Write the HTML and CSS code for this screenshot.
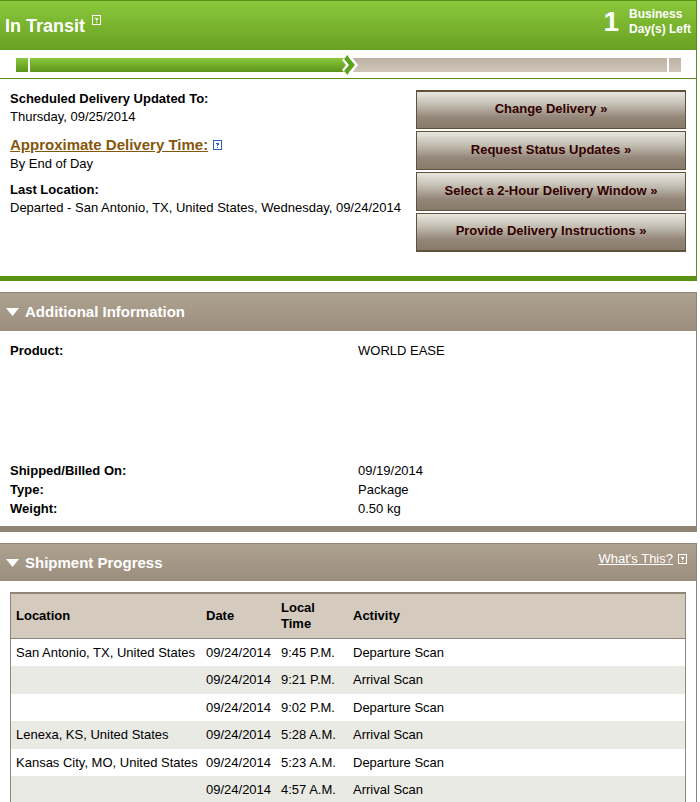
FILE: index.html
```html
<!DOCTYPE html>
<html lang="en">
<head>
<meta charset="utf-8">
<title>Tracking Detail</title>
<link rel="stylesheet" href="styles.css">
</head>
<body>
<svg class="sprite" aria-hidden="true">
  <symbol id="help" viewBox="0 0 9 10">
    <path fill="currentColor" fill-rule="evenodd" d="M0 0H9V10H0Z M1 1V9H8V1Z"/>
    <path fill="currentColor" d="M3 3H6V5H5V6H4V4H3Z M4 7H5V8H4Z"/>
  </symbol>
</svg>
<main>
  <section class="panel status">
    <header class="status-head">
      <h1>In Transit</h1>
      <a class="help raised" href="#status-help" aria-label="Help"><svg><use href="#help"/></svg></a>
      <div class="days"><span class="count">1</span><span>Business<br>Day(s) Left</span></div>
    </header>
    <div class="progress" role="img" aria-label="In transit">
      <span class="step done"></span>
      <span class="leg done"></span>
      <svg class="arrow" viewBox="0 0 18 20"><path d="M1 5L6 0L9 0L17 10L9 20L6 20L1 15L5 10Z" fill="#fff"/><path d="M3 4L6.500 0L14 10L6.500 20L3 16L8 10Z" fill="#5ca31c"/><path d="M8 1L15.500 10L8 19" fill="none" stroke="#fff" stroke-width="2"/></svg>
      <span class="leg"></span>
      <span class="step"></span>
    </div>
    <div class="status-body">
      <dl class="facts">
        <dt>Scheduled Delivery Updated To:</dt>
        <dd>Thursday, 09/25/2014</dd>
        <dt class="approx"><a href="#time">Approximate Delivery Time:</a> <a class="help blue" href="#time-help" aria-label="Help"><svg><use href="#help"/></svg></a></dt>
        <dd>By End of Day</dd>
        <dt>Last Location:</dt>
        <dd>Departed - San Antonio, TX, United States, Wednesday, 09/24/2014</dd>
      </dl>
      <div class="actions">
        <button type="button">Change Delivery »</button>
        <button type="button">Request Status Updates »</button>
        <button type="button">Select a 2-Hour Delivery Window »</button>
        <button type="button">Provide Delivery Instructions »</button>
      </div>
    </div>
  </section>

  <section class="panel">
    <header class="bar">
      <svg class="caret" viewBox="0 0 13 8"><path d="M0 0H13L6.500 8Z" fill="#fff"/></svg>
      <h2>Additional Information</h2>
    </header>
    <dl class="details">
      <div class="product"><dt>Product:</dt><dd>WORLD EASE</dd></div>
      <div><dt>Shipped/Billed On:</dt><dd>09/19/2014</dd></div>
      <div><dt>Type:</dt><dd>Package</dd></div>
      <div><dt>Weight:</dt><dd>0.50 kg</dd></div>
    </dl>
  </section>

  <section class="panel shipment">
    <header class="bar">
      <svg class="caret" viewBox="0 0 13 8"><path d="M0 0H13L6.500 8Z" fill="#fff"/></svg>
      <h2>Shipment Progress</h2>
      <div class="what"><a href="#what">What's This?</a><a class="help" href="#what" aria-label="Help"><svg><use href="#help"/></svg></a></div>
    </header>
    <div class="table-wrap">
      <table>
        <colgroup><col class="c-loc"><col class="c-date"><col class="c-time"><col></colgroup>
        <thead><tr><th>Location</th><th>Date</th><th>Local<br>Time</th><th>Activity</th></tr></thead>
        <tbody>
          <tr><td>San Antonio, TX, United States</td><td>09/24/2014</td><td>9:45 P.M.</td><td>Departure Scan</td></tr>
          <tr><td></td><td>09/24/2014</td><td>9:21 P.M.</td><td>Arrival Scan</td></tr>
          <tr><td></td><td>09/24/2014</td><td>9:02 P.M.</td><td>Departure Scan</td></tr>
          <tr><td>Lenexa, KS, United States</td><td>09/24/2014</td><td>5:28 A.M.</td><td>Arrival Scan</td></tr>
          <tr><td>Kansas City, MO, United States</td><td>09/24/2014</td><td>5:23 A.M.</td><td>Departure Scan</td></tr>
          <tr><td></td><td>09/24/2014</td><td>4:57 A.M.</td><td>Arrival Scan</td></tr>
        </tbody>
      </table>
    </div>
  </section>
</main>
</body>
</html>
```
FILE: styles.css
```css
* { box-sizing: border-box; }
body {
  margin: 0;
  background: #fff;
  color: #000;
  font: 13px/18px "Liberation Sans", Arial, sans-serif;
}
h1, h2, dl, dd { margin: 0; }
.sprite { position: absolute; width: 0; height: 0; }
main {
  display: flex;
  flex-direction: column;
  gap: 11px;
  padding-right: 3px;
}
.panel {
  border: solid #908474;
  border-width: 1px 1px 6px 0;
}
.status { border-color: #599116; border-bottom-width: 5px; }
.help { display: inline-block; color: #fff; width: 9px; height: 10px; }
.help svg { display: block; width: 9px; height: 10px; }
.help.blue { color: #2c62c8; margin-left: 1px; }
.status-head {
  display: flex;
  align-items: center;
  height: 49px;
  padding: 0 5px;
  color: #fff;
  background: linear-gradient(#8bc83c, #68a022);
}
h1 { font-size: 18px; line-height: 24px; }
.raised { margin: 0 0 12px 7px; }
.days {
  display: flex;
  align-items: center;
  gap: 10px;
  margin: 0 0 8px auto;
  font-weight: bold;
  font-size: 12px;
  line-height: 15px;
  white-space: nowrap;
}
.count { font-size: 28px; line-height: 28px; }
.progress {
  display: flex;
  gap: 2px;
  height: 29px;
  padding: 8px 15px 6px 16px;
  border-bottom: 1px solid #599116;
}
.step, .leg { height: 14px; background: linear-gradient(#bdb2a4, #cfc5b9); }
.step { width: 12px; }
.leg { flex: 1; }
.done { background: linear-gradient(#8bc83c, #5b9419); }
.arrow { width: 18px; height: 20px; margin: -3px -10px 0 -8px; z-index: 1; }
.status-body {
  display: flex;
  justify-content: space-between;
  min-height: 197px;
  padding: 11px 10px 24px;
}
.facts dt { font-weight: bold; }
.facts dd { margin-bottom: 8px; }
.facts .approx { font-size: 15px; line-height: 21px; }
.approx a:first-child { color: #85570b; }
.actions {
  display: flex;
  flex-direction: column;
  gap: 2px;
  flex: 0 0 270px;
}
button {
  height: 39px;
  padding: 0 0 2px;
  border: 1px solid #625139;
  color: #330000;
  background: linear-gradient(#e8e6e0, #c3beb2 35%, #94877a 70%, #897b6a);
  font: bold 13px/18px "Liberation Sans", Arial, sans-serif;
}
button:first-child { border-top-width: 2px; }
button:last-child { border-bottom-width: 2px; }
.bar {
  display: flex;
  align-items: center;
  height: 38px;
  padding: 0 9px 0 6px;
  color: #fff;
  background: linear-gradient(#ada190, #9c8e7e);
}
.caret { width: 13px; height: 8px; }
h2 { margin-left: 6px; font-size: 15px; line-height: 20px; }
.what {
  display: flex;
  align-items: center;
  gap: 5px;
  margin: 0 0 8px auto;
}
.what a { color: #fff; }
.details { padding: 10px 10px 8px; line-height: 19px; }
.details div { display: grid; grid-template-columns: 348px 1fr; }
.details dt { font-weight: bold; }
.product { min-height: 120px; }
.shipment .bar { height: 37px; }
.shipment { border-bottom: 0; }
.table-wrap { padding: 11px 10px 0; }
table {
  width: 100%;
  border-collapse: separate;
  border-spacing: 0;
  border: solid #908474;
  border-width: 2px 1px 0;
  table-layout: fixed;
}
.c-loc { width: 190px; }
.c-date { width: 75px; }
.c-time { width: 72px; }
th, td { padding: 0 5px; text-align: left; white-space: nowrap; }
th {
  height: 45px;
  line-height: 16px;
  background: #d4cbbe;
  border-bottom: 1px solid #908474;
}
td { height: 27px; }
tbody tr:nth-child(even) td { height: 28px; background: #e9eae4; }
```
